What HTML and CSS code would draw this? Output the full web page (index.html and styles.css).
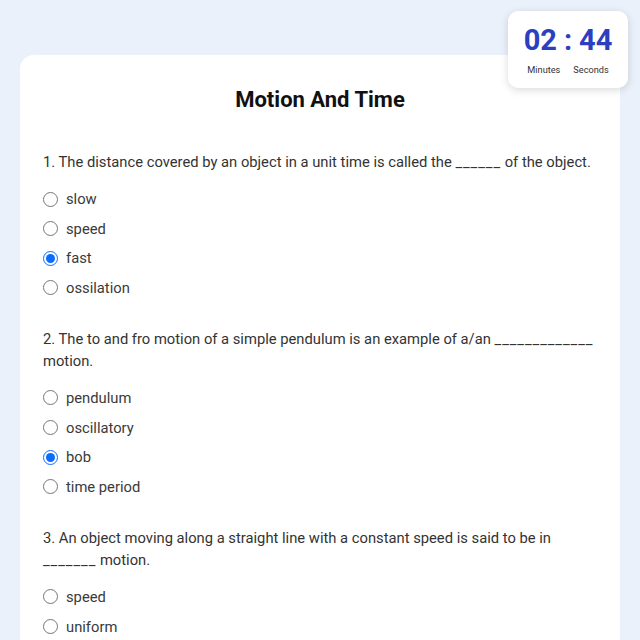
FILE: index.html
```html
<!DOCTYPE html>
<html>
<head>
<meta charset="utf-8">
<link rel="stylesheet" href="styles.css">
</head>
<body>
<div class="timer">
  <div class="digits"><span class="num">02</span><span class="colon">:</span><span class="num">44</span></div>
  <div class="labels"><span class="lbl">Minutes</span><span class="lbl">Seconds</span></div>
</div>
<main class="card">
  <h1 class="title">Motion And Time</h1>
  <section class="question">
    <p class="qtext">1. The distance covered by an object in a unit time is called the <span class="blank">______</span> of the object.</p>
    <div class="options">
      <label class="opt"><input type="radio" name="q1"><span>slow</span></label>
      <label class="opt"><input type="radio" name="q1"><span>speed</span></label>
      <label class="opt"><input type="radio" name="q1" checked><span>fast</span></label>
      <label class="opt"><input type="radio" name="q1"><span>ossilation</span></label>
    </div>
  </section>
  <section class="question">
    <p class="qtext">2. The to and fro motion of a simple pendulum is an example of a/an <span class="blank">_____________</span> motion.</p>
    <div class="options">
      <label class="opt"><input type="radio" name="q2"><span>pendulum</span></label>
      <label class="opt"><input type="radio" name="q2"><span>oscillatory</span></label>
      <label class="opt"><input type="radio" name="q2" checked><span>bob</span></label>
      <label class="opt"><input type="radio" name="q2"><span>time period</span></label>
    </div>
  </section>
  <section class="question">
    <p class="qtext">3. An object moving along a straight line with a constant speed is said to be in <span class="blank">_______</span> motion.</p>
    <div class="options">
      <label class="opt"><input type="radio" name="q3"><span>speed</span></label>
      <label class="opt"><input type="radio" name="q3"><span>uniform</span></label>
      <label class="opt"><input type="radio" name="q3"><span>non-uniform</span></label>
      <label class="opt"><input type="radio" name="q3"><span>oscillatory</span></label>
    </div>
  </section>
</main>
</body>
</html>
```
FILE: styles.css
```css
html, body {
  margin: 0;
  padding: 0;
}
body {
  background: #eaf1fa;
  font-family: Roboto, "Liberation Sans", sans-serif;
  color: #333;
  padding: 55px 20px 20px;
}
.card {
  background: #fff;
  border-radius: 14px;
  padding: 31px 23px 30px;
}
.title {
  margin: 0 0 37px;
  font-size: 22px;
  line-height: 28px;
  font-weight: 700;
  text-align: center;
  color: #111;
}
.question {
  margin-bottom: 29px;
}
.qtext {
  margin: 0 0 15px;
  font-size: 14.75px;
  line-height: 22px;
  color: #333;
}
.blank {
  letter-spacing: 0.95px;
}
.options {
  display: flex;
  flex-direction: column;
  gap: 7.67px;
}
.opt {
  display: flex;
  align-items: center;
  height: 22px;
  font-size: 14.75px;
  color: #3a3a3a;
}
.opt input {
  width: 15px;
  height: 15px;
  margin: 0 8px 0 0;
  accent-color: #0a6cff;
}
.timer {
  position: absolute;
  top: 11px;
  right: 12px;
  width: 120px;
  height: 77px;
  box-sizing: border-box;
  background: #fff;
  border-radius: 10px;
  box-shadow: 0 2px 8px rgba(0, 0, 0, 0.15);
  display: flex;
  flex-direction: column;
  align-items: center;
  padding-top: 14px;
}
.digits {
  display: flex;
  gap: 7px;
  font-size: 29px;
  line-height: 30px;
  font-weight: 700;
  color: #2b3fbf;
}
.labels {
  display: flex;
  gap: 13px;
  margin-top: 9px;
  font-size: 9.2px;
  line-height: 12px;
  color: #333;
}
```
